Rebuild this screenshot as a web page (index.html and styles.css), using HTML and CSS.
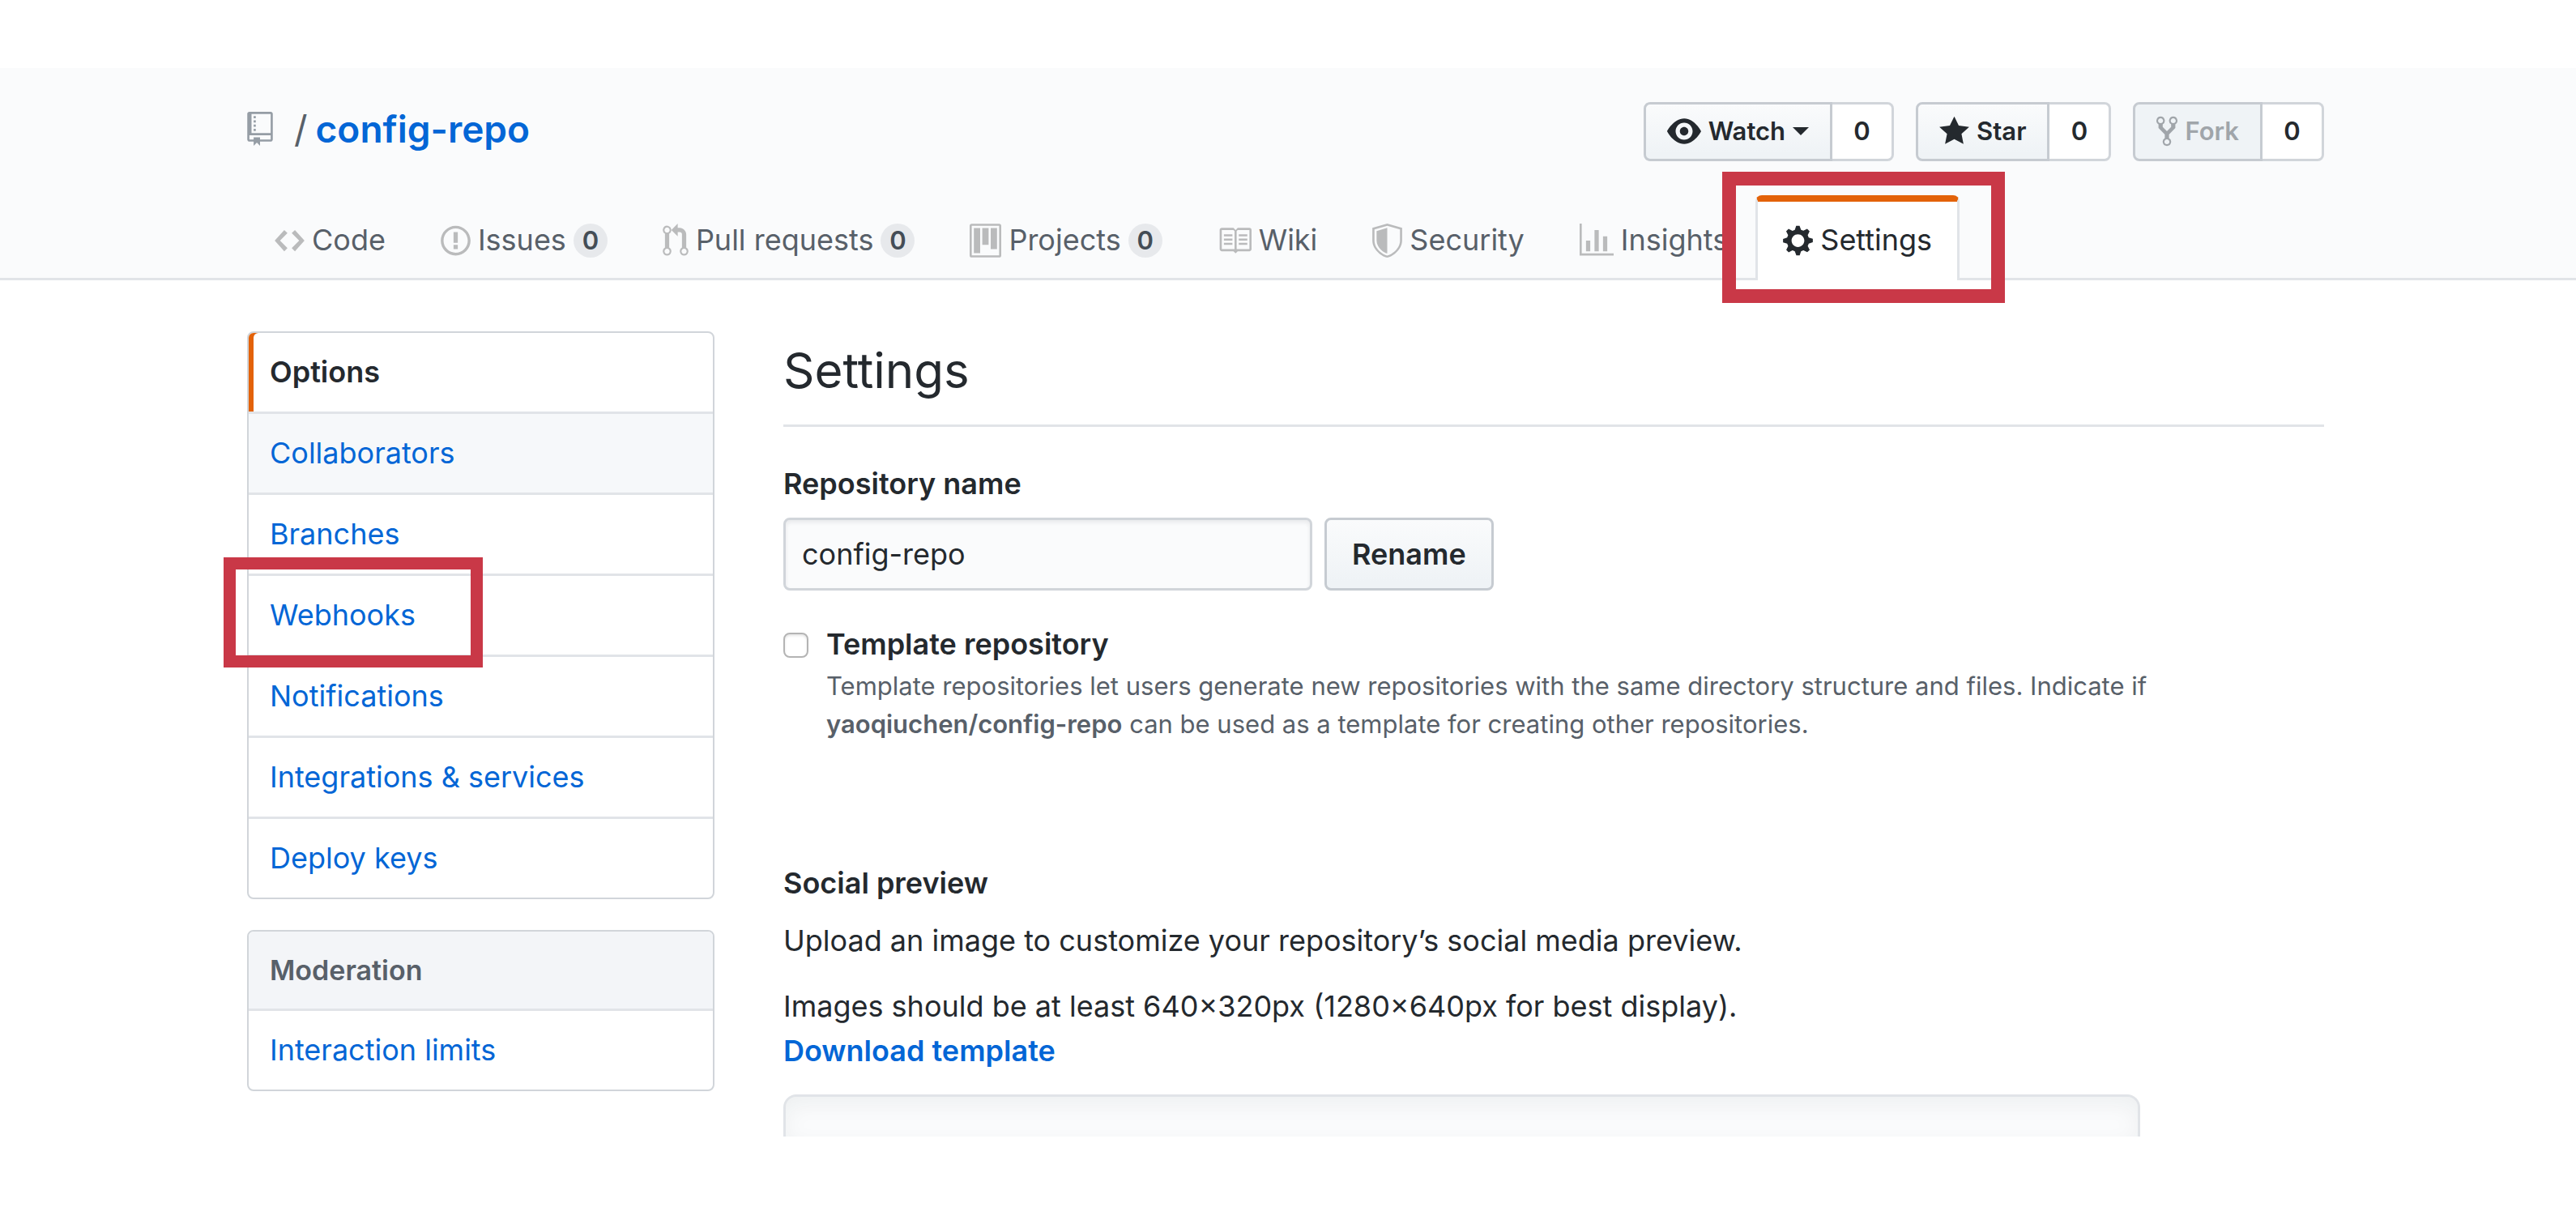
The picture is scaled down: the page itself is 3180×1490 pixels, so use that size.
FILE: index.html
```html
<!DOCTYPE html>
<html lang="en">
<head>
<meta charset="utf-8">
<title>Settings · config-repo</title>
<link rel="stylesheet" href="styles.css">
</head>
<body>
<header class="repo-head">
  <div class="repo-bar">
    <h1 class="repo-title">
      <svg class="icon icon-12 repo-icon" viewBox="0 0 12 16" aria-hidden="true"><path fill-rule="evenodd" d="M4 9H3V8h1v1zm0-3H3v1h1V6zm0-2H3v1h1V4zm0-2H3v1h1V2zm8-1v12c0 .55-.45 1-1 1H6v2l-1.5-1.5L3 16v-2H1c-.55 0-1-.45-1-1V1c0-.55.45-1 1-1h10c.55 0 1 .45 1 1zm-1 10H1v2h2v-1h3v1h5v-2zm0-10H2v9h9V1z"/></svg>
      <span class="slash">/</span>
      <a href="#">config-repo</a>
    </h1>
    <ul class="actions">
      <li class="action">
        <button type="button" class="btn btn-sm"><svg class="icon icon-16" viewBox="0 0 16 16" aria-hidden="true"><path fill-rule="evenodd" d="M8.06 2C3 2 0 8 0 8s3 6 8.06 6C13 14 16 8 16 8s-3-6-7.94-6zM8 12c-2.2 0-4-1.78-4-4 0-2.2 1.8-4 4-4 2.22 0 4 1.8 4 4 0 2.22-1.78 4-4 4zm2-4c0 1.11-.89 2-2 2-1.11 0-2-.89-2-2 0-1.11.89-2 2-2 1.11 0 2 .89 2 2z"/></svg>Watch<span class="caret"></span></button>
        <a class="count" href="#">0</a>
      </li>
      <li class="action">
        <button type="button" class="btn btn-sm"><svg class="icon icon-14" viewBox="0 0 14 16" aria-hidden="true"><path d="M14 6l-4.9-.64L7 1 4.9 5.36 0 6l3.6 3.26L2.67 14 7 11.67 11.33 14l-.93-4.74L14 6z"/></svg>Star</button>
        <a class="count" href="#">0</a>
      </li>
      <li class="action">
        <button type="button" class="btn btn-sm" disabled><svg class="icon icon-10" viewBox="0 0 10 16" aria-hidden="true"><path fill-rule="evenodd" d="M8 1a1.993 1.993 0 0 0-1 3.72V6L5 8 3 6V4.72A1.993 1.993 0 0 0 2 1a1.993 1.993 0 0 0-1 3.72V6.5l3 3v1.78A1.993 1.993 0 0 0 5 15a1.993 1.993 0 0 0 1-3.72V9.5l3-3V4.72A1.993 1.993 0 0 0 8 1zM2 4.2C1.34 4.2.8 3.65.8 3c0-.65.55-1.2 1.2-1.2.65 0 1.2.55 1.2 1.2 0 .65-.55 1.2-1.2 1.2zm3 10c-.66 0-1.2-.55-1.2-1.2 0-.65.55-1.2 1.2-1.2.65 0 1.2.55 1.2 1.2 0 .65-.55 1.2-1.2 1.2zm3-10c-.66 0-1.2-.55-1.2-1.2 0-.65.55-1.2 1.2-1.2.65 0 1.2.55 1.2 1.2 0 .65-.55 1.2-1.2 1.2z"/></svg>Fork</button>
        <a class="count" href="#">0</a>
      </li>
    </ul>
  </div>
  <nav class="tabs" aria-label="Repository">
    <a class="tab" href="#"><svg class="icon icon-14" viewBox="0 0 14 16" aria-hidden="true"><path d="M9.5 3L8 4.5 11.5 8 8 11.5 9.5 13 14 8 9.5 3zm-5 0L0 8l4.5 5L6 11.5 2.5 8 6 4.5 4.5 3z"/></svg>Code</a>
    <a class="tab" href="#"><svg class="icon icon-14" viewBox="0 0 14 16" aria-hidden="true"><path fill-rule="evenodd" d="M7 2.3c3.14 0 5.7 2.56 5.7 5.7s-2.56 5.7-5.7 5.7A5.71 5.71 0 0 1 1.3 8c0-3.14 2.56-5.7 5.7-5.7zM7 1C3.14 1 0 4.14 0 8s3.14 7 7 7 7-3.14 7-7-3.14-7-7-7zm1 3H6v5h2V4zm0 6H6v2h2v-2z"/></svg>Issues<span class="counter">0</span></a>
    <a class="tab" href="#"><svg class="icon icon-12" viewBox="0 0 12 16" aria-hidden="true"><path fill-rule="evenodd" d="M11 11.28V5c-.03-.78-.34-1.47-.94-2.06C9.46 2.35 8.78 2.03 8 2H7V0L4 3l3 3V4h1c.27.02.48.11.69.31.21.2.3.42.31.69v6.28A1.993 1.993 0 0 0 10 15a1.993 1.993 0 0 0 1-3.72zm-1 2.92c-.66 0-1.2-.55-1.2-1.2 0-.65.55-1.2 1.2-1.2.65 0 1.2.55 1.2 1.2 0 .65-.55 1.2-1.2 1.2zM4 3c0-1.11-.89-2-2-2a1.993 1.993 0 0 0-1 3.72v6.56A1.993 1.993 0 0 0 2 15a1.993 1.993 0 0 0 1-3.72V4.72c.59-.34 1-.98 1-1.72zm-.8 10c0 .66-.55 1.2-1.2 1.2-.65 0-1.2-.55-1.2-1.2 0-.65.55-1.2 1.2-1.2.65 0 1.2.55 1.2 1.2zM2 4.2C1.34 4.2.8 3.65.8 3c0-.65.55-1.2 1.2-1.2.65 0 1.2.55 1.2 1.2 0 .65-.55 1.2-1.2 1.2z"/></svg>Pull requests<span class="counter">0</span></a>
    <a class="tab" href="#"><svg class="icon icon-15" viewBox="0 0 15 16" aria-hidden="true"><path fill-rule="evenodd" d="M10 12h3V2h-3v10zm-4-2h3V2H6v8zm-4 4h3V2H2v12zm-1 1h13V1H1v14zM14 0H1a1 1 0 0 0-1 1v14a1 1 0 0 0 1 1h13a1 1 0 0 0 1-1V1a1 1 0 0 0-1-1z"/></svg>Projects<span class="counter">0</span></a>
    <a class="tab" href="#"><svg class="icon icon-16" viewBox="0 0 16 16" aria-hidden="true"><path fill-rule="evenodd" d="M3 5h4v1H3V5zm0 3h4V7H3v1zm0 2h4V9H3v1zm11-5h-4v1h4V5zm0 2h-4v1h4V7zm0 2h-4v1h4V9zm2-6v9c0 .55-.45 1-1 1H9.5l-1 1-1-1H2c-.55 0-1-.45-1-1V3c0-.55.45-1 1-1h5.5l1 1 1-1H15c.55 0 1 .45 1 1zm-8 .5L7.5 3H2v9h6V3.5zm7-.5H9.5l-.5.5V12h6V3z"/></svg>Wiki</a>
    <a class="tab" href="#"><svg class="icon icon-14" viewBox="0 0 14 16" aria-hidden="true"><path fill-rule="evenodd" d="M0 2l7-2 7 2v6.02C14 12.69 8.69 16 7 16c-1.69 0-7-3.31-7-7.98V2zm1 .75L7 1l6 1.75v5.268C13 12.104 8.449 15 7 15c-1.449 0-6-2.896-6-6.982V2.75zm1 .75L7 2v12c-1.207 0-5-2.482-5-5.985V3.5z"/></svg>Security</a>
    <a class="tab" href="#"><svg class="icon icon-16" viewBox="0 0 16 16" aria-hidden="true"><path d="M16 14v1H0V0h1v14h15zM5 13H3V8h2v5zm4 0H7V3h2v10zm4 0h-2V6h2v7z"/></svg>Insights</a>
    <a class="tab tab-current marked" href="#" aria-current="page"><svg class="icon icon-14" viewBox="0 0 14 16" aria-hidden="true"><path fill-rule="evenodd" d="M14 8.77v-1.6l-1.94-.64-.45-1.09.88-1.84-1.13-1.13-1.81.91-1.09-.45-.69-1.92h-1.6l-.63 1.94-1.11.45-1.84-.88-1.13 1.13.91 1.81-.45 1.09L0 7.23v1.59l1.94.64.45 1.09-.88 1.84 1.13 1.13 1.81-.91 1.09.45.69 1.92h1.59l.63-1.94 1.11-.45 1.84.88 1.13-1.13-.92-1.81.47-1.09L14 8.75v.02zM7 11c-1.66 0-3-1.34-3-3s1.34-3 3-3 3 1.34 3 3-1.34 3-3 3z"/></svg>Settings</a>
  </nav>
</header>
<div class="page">
  <aside class="sidebar">
    <nav class="menu" aria-label="Repository settings">
      <a class="menu-item menu-current" href="#" aria-current="page">Options</a>
      <a class="menu-item menu-hover" href="#">Collaborators</a>
      <a class="menu-item" href="#">Branches</a>
      <a class="menu-item marked" href="#">Webhooks</a>
      <a class="menu-item" href="#">Notifications</a>
      <a class="menu-item" href="#">Integrations &amp; services</a>
      <a class="menu-item" href="#">Deploy keys</a>
    </nav>
    <nav class="menu" aria-labelledby="moderation">
      <h3 class="menu-heading" id="moderation">Moderation</h3>
      <a class="menu-item" href="#">Interaction limits</a>
    </nav>
  </aside>
  <main class="content">
    <h2 class="content-title">Settings</h2>
    <form class="rename-form">
      <label class="field-label" for="repo-name">Repository name</label>
      <div class="field-row">
        <input class="text-input" id="repo-name" type="text" value="config-repo">
        <button type="button" class="btn btn-lg">Rename</button>
      </div>
    </form>
    <div class="option">
      <input class="checkbox" id="template" type="checkbox" aria-describedby="template-note">
      <div class="option-text">
        <label class="field-label" for="template">Template repository</label>
        <p class="note" id="template-note">Template repositories let users generate new repositories with the same directory structure and files. Indicate if <br><strong>yaoqiuchen/config-repo</strong> can be used as a template for creating other repositories.</p>
      </div>
    </div>
    <section class="social">
      <h3 class="field-label">Social preview</h3>
      <p class="social-lead">Upload an image to customize your repository’s social media preview.</p>
      <p class="social-size">Images should be at least 640×320px (1280×640px for best display).<br><a class="download" href="#">Download template</a></p>
      <div class="preview"></div>
    </section>
  </main>
</div>
</body>
</html>
```
FILE: styles.css
```css
*,
*::after {
  box-sizing: border-box;
}

body {
  margin: 0;
  padding-top: 84px;
  background: #fff;
  color: #24292e;
  font: 400 36px/55px Inter, "Liberation Sans", sans-serif;
}

h1, h2, h3, p, ul {
  margin: 0;
  padding: 0;
}

a {
  color: #0366d6;
  text-decoration: none;
}

button, input {
  font: inherit;
  color: inherit;
}

.icon {
  flex: none;
  height: 42px;
  fill: currentColor;
}

.icon-10 { width: 26px; }
.icon-12 { width: 32px; }
.icon-14 { width: 37px; }
.icon-15 { width: 39px; }
.icon-16 { width: 42px; }

/* Repository header */

.repo-head {
  padding: 42px 311px 0 305px;
  background: #fafbfc;
  border-bottom: 3px solid #e1e4e8;
}

.repo-bar {
  display: flex;
  justify-content: space-between;
  align-items: flex-start;
}

.repo-title {
  display: flex;
  align-items: center;
  font-size: 46px;
  line-height: 66px;
  font-weight: 600;
}

.repo-icon {
  margin-right: 26px;
  color: #959da5;
}

.slash {
  margin-right: 10px;
  color: #586069;
  font-weight: 400;
}

.actions {
  display: flex;
  gap: 27px;
  list-style: none;
}

.action {
  display: flex;
}

.btn {
  display: flex;
  align-items: center;
  border: 3px solid #c6cbd1;
  border-radius: 8px;
  background: linear-gradient(#fafbfc, #eff3f6 90%);
  font-weight: 600;
}

.btn-sm {
  gap: 9px;
  padding: 8px 26px 9px;
  border-radius: 8px 0 0 8px;
  font-size: 31px;
  line-height: 50px;
}

.btn-sm:disabled {
  background: #eff3f6;
  color: #a0a5aa;
}

.btn-lg {
  padding: 0 31px;
}

.caret {
  border: 10px solid transparent;
  border-top-color: currentColor;
  border-bottom: 0;
}

.count {
  min-width: 76px;
  padding: 8px 24px 9px;
  border: 3px solid #d1d5da;
  border-left: 0;
  border-radius: 0 8px 8px 0;
  background: #fff;
  color: #24292e;
  font-size: 31px;
  line-height: 50px;
  font-weight: 600;
  text-align: center;
}

.tabs {
  display: flex;
  margin: 42px 0 -3px;
}

.tab {
  display: flex;
  align-items: center;
  gap: 9px;
  padding: 20px 31px 22px;
  border: 3px solid transparent;
  border-width: 8px 3px 0;
  border-radius: 8px 8px 0 0;
  color: #586069;
  white-space: nowrap;
}

.tab .icon {
  color: #babbbc;
}

.tab-current {
  position: relative;
  border-color: #e36209 #e1e4e8 transparent;
  background: #fff;
  color: #24292e;
}

.tab-current .icon {
  color: inherit;
}

.counter {
  min-width: 42px;
  padding: 0 10px;
  border-radius: 21px;
  background: #e7e9ec;
  color: #444d56;
  font-size: 31px;
  line-height: 42px;
  font-weight: 600;
  text-align: center;
}

/* Red frames over the steps to follow */

.marked::after {
  content: "";
  position: absolute;
  z-index: 1;
  border: 15px solid #c93847;
  pointer-events: none;
}

.tab.marked::after {
  inset: -37px -59px -28px -44px;
  border-width: 17px;
}

.menu-item.marked::after {
  top: -23px;
  bottom: -16px;
  left: -31px;
  width: 320px;
}

/* Page body */

.page {
  display: flex;
  align-items: flex-start;
  gap: 85px;
  padding: 63px 311px 88px 305px;
}

.sidebar {
  display: flex;
  flex: none;
  flex-direction: column;
  gap: 38px;
  width: 577px;
}

.menu {
  border: 2px solid #d1d5da;
  border-radius: 8px;
}

.menu-item {
  display: block;
  position: relative;
  padding: 21px 26px;
}

.menu-item + .menu-item {
  border-top: 3px solid #e1e4e8;
}

.menu-current {
  border-radius: 6px 0 0 0;
  box-shadow: inset 6px 0 #e36209;
  color: #24292e;
  font-weight: 600;
}

.menu-hover {
  background: #f6f8fa;
}

.menu-heading {
  padding: 20px 26px;
  border-bottom: 3px solid #e1e4e8;
  border-radius: 6px 6px 0 0;
  background: #f3f5f8;
  color: #586069;
  font-size: 34px;
  line-height: 55px;
  font-weight: 600;
}

.content {
  flex: 1;
  min-width: 0;
}

.content-title {
  padding-bottom: 19px;
  border-bottom: 3px solid #e1e4e8;
  font-size: 60px;
  line-height: 96px;
  font-weight: 400;
}

.rename-form {
  margin-top: 43px;
}

.field-label {
  display: block;
  font-size: 36px;
  line-height: 55px;
  font-weight: 600;
}

.field-row {
  display: flex;
  gap: 15px;
  margin-top: 14px;
}

.text-input {
  width: 653px;
  height: 90px;
  padding: 0 20px;
  border: 3px solid #d1d5da;
  border-radius: 8px;
  background: #fafbfc;
  box-shadow: inset 0 3px 5px rgba(27, 31, 35, .08);
}

.option {
  display: flex;
  gap: 22px;
  margin-top: 39px;
}

.checkbox {
  appearance: none;
  flex: none;
  width: 31px;
  height: 31px;
  margin: 13px 0 0;
  border: 2px solid #b4b4b4;
  border-radius: 8px;
  background: #fff;
  box-shadow: inset 0 2px 3px rgba(0, 0, 0, .1);
}

.note {
  color: #586069;
  font-size: 31px;
  line-height: 47px;
}

.note strong {
  font-weight: 600;
}

.social {
  margin-top: 146px;
}

.social-lead {
  margin-top: 16px;
}

.social-size {
  margin-top: 26px;
}

.download {
  font-weight: 600;
}

.preview {
  max-width: 1675px;
  height: 52px;
  margin-top: 26px;
  border: 3px solid #e1e4e8;
  border-bottom: 0;
  border-radius: 16px 16px 0 0;
  background: #fafbfc;
  box-shadow: inset 0 10px 26px rgba(27, 31, 35, .05);
}
```
